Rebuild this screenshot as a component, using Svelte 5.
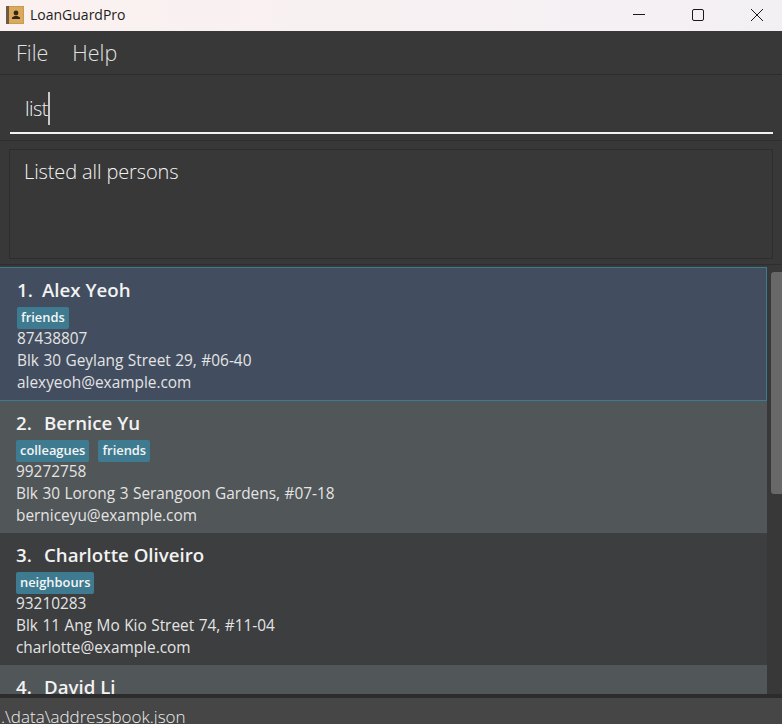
<script>
  const persons = [
    { name: 'Alex Yeoh', tags: ['friends'], phone: '87438807', address: 'Blk 30 Geylang Street 29, #06-40', email: 'alexyeoh@example.com' },
    { name: 'Bernice Yu', tags: ['colleagues', 'friends'], phone: '99272758', address: 'Blk 30 Lorong 3 Serangoon Gardens, #07-18', email: 'berniceyu@example.com' },
    { name: 'Charlotte Oliveiro', tags: ['neighbours'], phone: '93210283', address: 'Blk 11 Ang Mo Kio Street 74, #11-04', email: 'charlotte@example.com' },
    { name: 'David Li', tags: ['family'], phone: '91031282', address: 'Blk 436 Serangoon Gardens Street 26, #16-43', email: 'lidavid@example.com' }
  ];
</script>

<div class="window">
  <header class="titlebar">
    <svg class="app-icon" width="18" height="18" viewBox="0 0 18 18">
      <rect x="0" y="0" width="18" height="18" fill="#c99a52"/>
      <rect x="3" y="1" width="14" height="16" fill="#dba95c"/>
      <rect x="0" y="0" width="3" height="18" fill="#6b5a45"/>
      <circle cx="10" cy="7" r="2.4" fill="#33271a"/>
      <path d="M6 13h8v-1.5l-2.5-1.5h-3l-2.5 1.5z" fill="#33271a"/>
    </svg>
    <span class="app-name">LoanGuardPro</span>
    <div class="win-controls">
      <svg width="14" height="14" viewBox="0 0 14 14"><path d="M1 6.5h12" stroke="#1a1a1a" fill="none"/></svg>
      <svg width="14" height="14" viewBox="0 0 14 14"><rect x="1.5" y="1.5" width="11" height="11" rx="1.5" stroke="#1a1a1a" fill="none"/></svg>
      <svg width="14" height="14" viewBox="0 0 14 14"><path d="M1 1l12 12M13 1L1 13" stroke="#1a1a1a" fill="none"/></svg>
    </div>
  </header>

  <nav class="menu">
    <span>File</span>
    <span>Help</span>
  </nav>

  <div class="command">
    <div class="command-input"><span>list</span><i class="caret"></i></div>
  </div>

  <div class="result-wrap">
    <div class="result">Listed all persons</div>
  </div>

  <div class="list-wrap">
    <div class="list">
      {#each persons as p, i}
        <div class="card" class:selected={i === 0} class:even={i % 2 === 1}>
          <div class="name"><span class="index">{i + 1}.</span>{p.name}</div>
          <div class="tags">
            {#each p.tags as t}
              <span class="tag">{t}</span>
            {/each}
          </div>
          <div class="line">{p.phone}</div>
          <div class="line">{p.address}</div>
          <div class="line">{p.email}</div>
        </div>
      {/each}
    </div>
    <div class="scrollbar"><div class="thumb"></div></div>
  </div>

  <footer class="status">.\data\addressbook.json</footer>
</div>

<style>
  :global(*) { box-sizing: border-box; margin: 0; padding: 0; }
  :global(body) { background: #383838; }
  .window {
    width: 782px;
    height: 724px;
    display: flex;
    flex-direction: column;
    overflow: hidden;
    background: #383838;
    font-family: 'Open Sans', 'Noto Sans', sans-serif;
  }
  .titlebar {
    height: 31px;
    flex: none;
    display: flex;
    align-items: center;
    padding: 0 0 2px 6px;
    background: linear-gradient(90deg, #fbf1f0, #f3f0f4);
  }
  .app-icon { flex: none; }
  .app-name {
    margin-left: 6px;
    font-size: 14px;
    color: #1c1c1c;
  }
  .win-controls {
    margin-left: auto;
    display: flex;
    gap: 45px;
    padding-right: 18px;
  }
  .menu {
    height: 44px;
    flex: none;
    display: flex;
    align-items: center;
    gap: 24px;
    padding: 0 0 1px 16px;
    border-bottom: 1px solid #2c2c2c;
    font-size: 21.5px;
    font-weight: 300;
    color: #e2e2e2;
  }
  .command {
    height: 66px;
    flex: none;
    padding: 0 9px 0 10px;
    border-bottom: 1px solid #2e2e2e;
  }
  .command-input {
    height: 59px;
    display: flex;
    align-items: center;
    padding: 9px 0 0 15px;
    border-bottom: 2px solid #f2f2f2;
    font-size: 20px;
    font-weight: 300;
    letter-spacing: -0.5px;
    color: #f2f2f2;
  }
  .caret {
    width: 2px;
    height: 33px;
    background: #c8c8c8;
  }
  .result-wrap {
    height: 124px;
    flex: none;
    padding: 8px 9px 5px 9px;
    border-bottom: 1px solid #2e2e2e;
  }
  .result {
    height: 110px;
    padding: 8px 14px;
    border: 1px solid #2d2d2d;
    font-size: 20px;
    font-weight: 300;
    letter-spacing: -0.12px;
    line-height: 28px;
    color: #f4f4f4;
  }
  .list-wrap {
    height: 429px;
    flex: none;
    display: flex;
    padding-top: 2px;
    overflow: hidden;
  }
  .list { width: 767px; flex: none; }
  .card {
    height: 132px;
    padding: 10px 16px 0;
    background: #3c3e3f;
    color: #eeeeee;
  }
  .card.even { background: #515658; }
  .card.selected {
    height: 134px;
    padding: 10px 17px 0;
    background: #424e60;
    border: 1px solid #3e7b91;
    border-left: 0;
  }
  .name {
    height: 29px;
    font-size: 18.7px;
    font-weight: 600;
    line-height: 23px;
    color: #f2f2f2;
  }
  .index { display: inline-block; width: 28px; }
  .selected .index { width: 25px; }
  .tags {
    display: flex;
    gap: 9px;
    height: 21px;
  }
  .tag {
    height: 22px;
    padding: 0 4px;
    border-radius: 2px;
    background: #3e7b91;
    color: #f5f5f5;
    font-size: 12.9px;
    font-weight: 560;
    line-height: 21px;
  }
  .line {
    height: 22px;
    font-size: 15.4px;
    word-spacing: 0.5px;
    line-height: 22px;
    color: #e4e4e4;
  }
  .scrollbar {
    flex: 1;
    padding: 5px 0 0 4px;
  }
  .thumb {
    height: 222px;
    background: #686868;
    border-radius: 3px 0 0 3px;
  }
  .status {
    height: 30px;
    flex: none;
    padding: 7px 0 0 1px;
    border-top: 4px solid #2c2c2c;
    background: #464646;
    font-size: 17px;
    font-weight: 300;
    line-height: 24px;
    color: #eeeeee;
  }
</style>
